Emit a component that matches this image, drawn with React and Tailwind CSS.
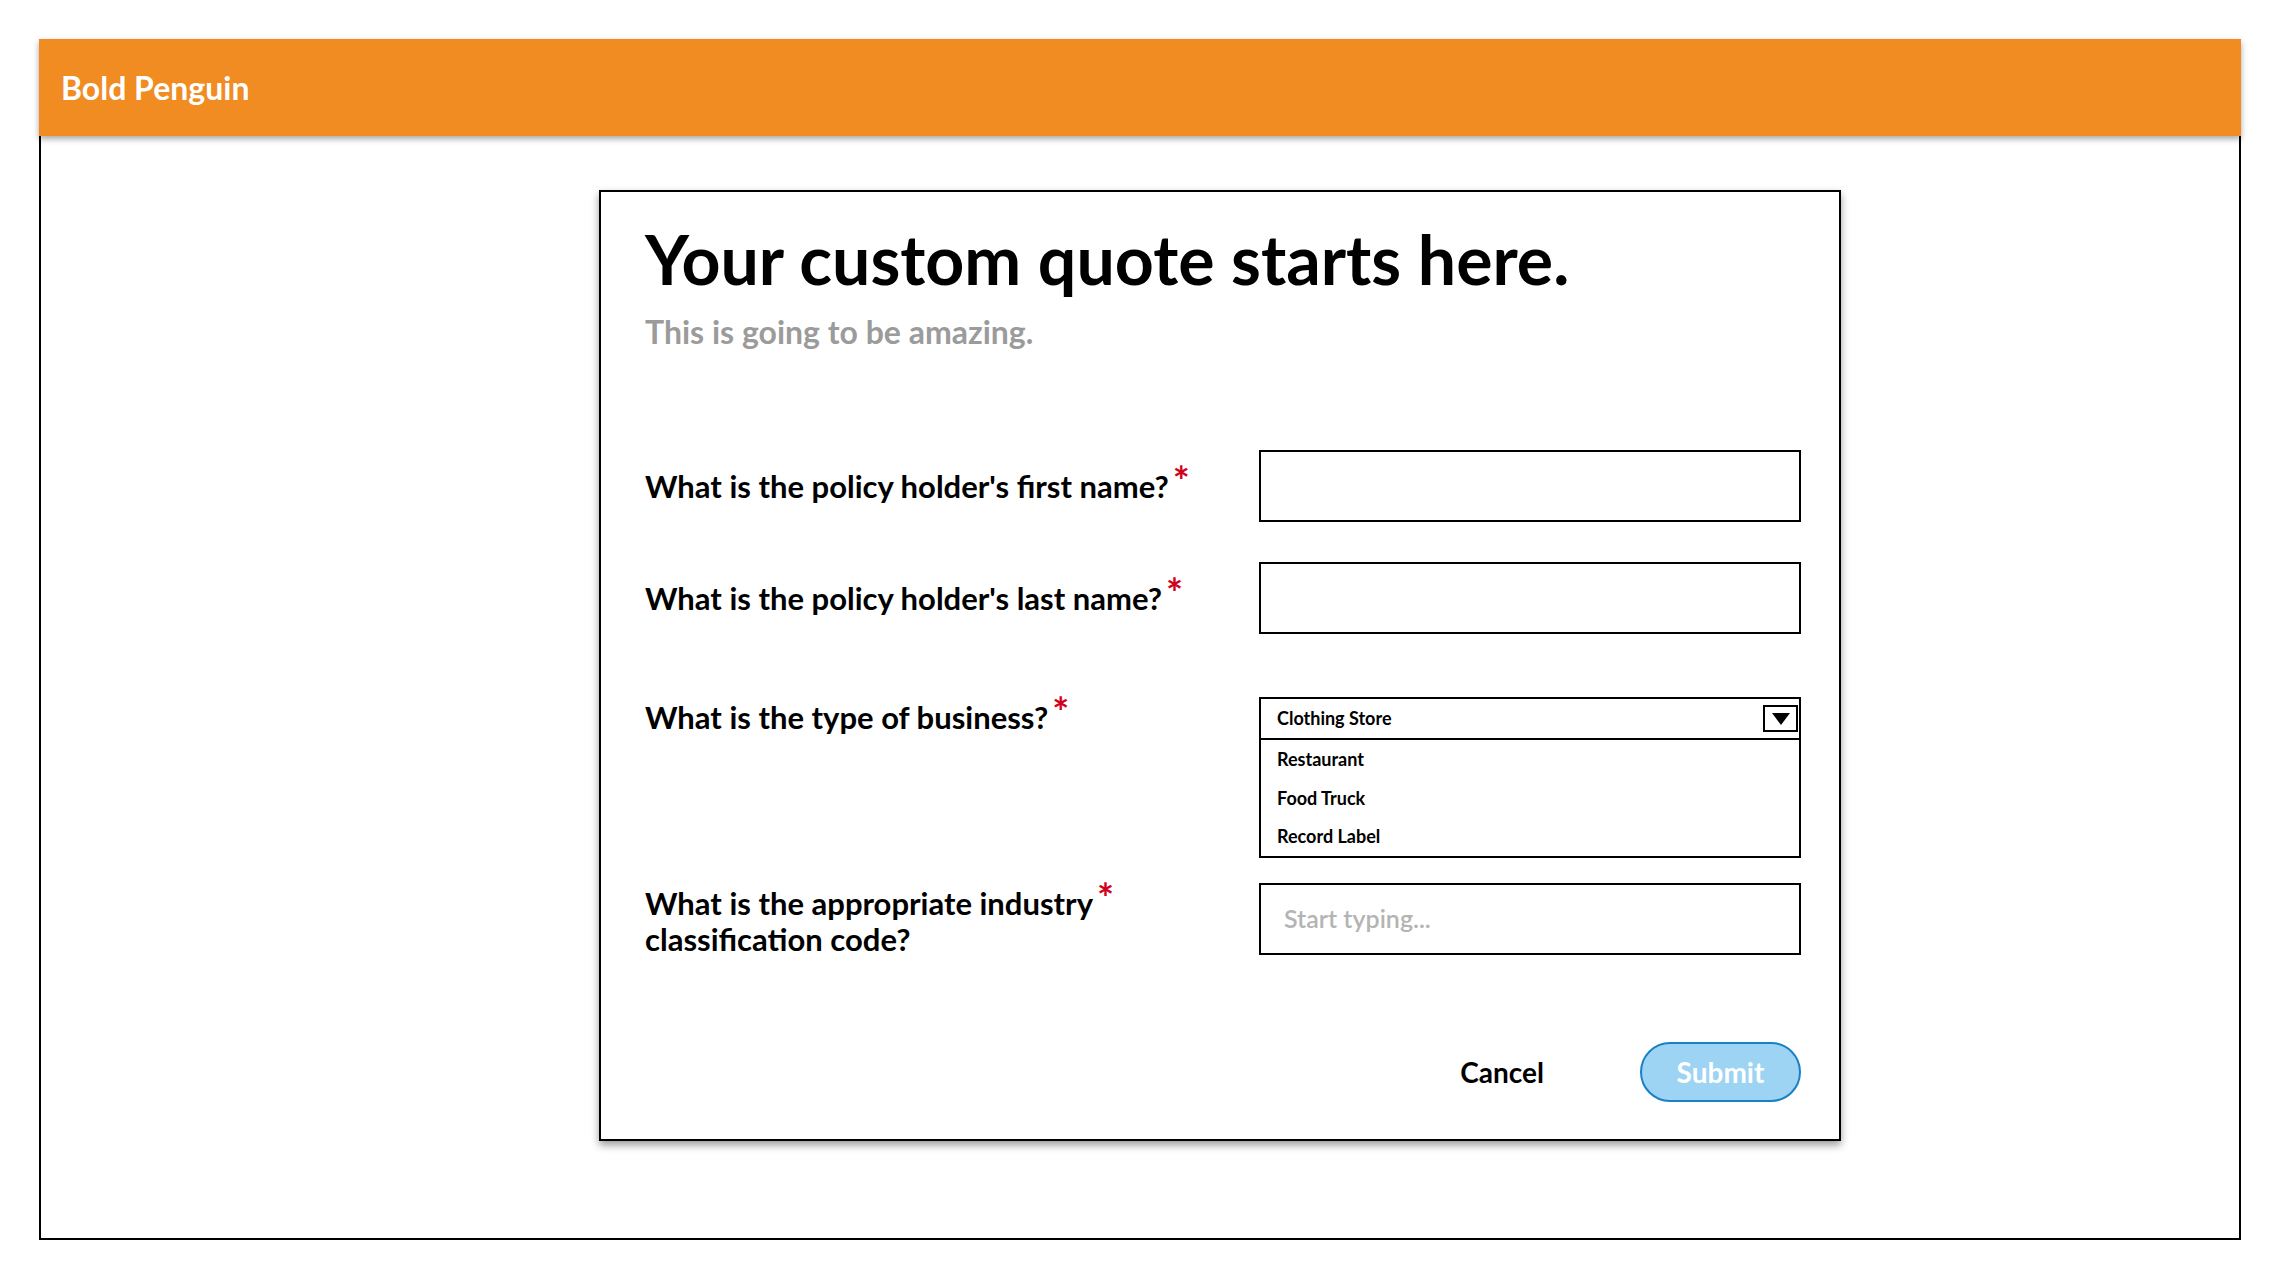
const font = { fontFamily: '"Lato", "Liberation Sans", sans-serif' };

function Req() {
  return <span className="relative -top-[2px] ml-[4px] text-[40px] leading-none text-[#d0021b]">*</span>;
}

function TextField({ placeholder }) {
  return (
    <div className="flex h-[72px] w-[542px] items-center border-2 border-black bg-white pl-[23px]">
      {placeholder && <span className="text-[25px] font-semibold text-[#b4b4b4]">{placeholder}</span>}
    </div>
  );
}

function BusinessSelect() {
  const options = ['Restaurant', 'Food Truck', 'Record Label'];
  return (
    <div className="w-[542px] border-2 border-black bg-white">
      <div className="flex h-[41px] items-center justify-between border-b-2 border-black pl-[16px] pr-[1px]">
        <span className="text-[18px] font-bold text-black">Clothing Store</span>
        <div className="flex h-[27px] w-[35px] items-center justify-center border-2 border-black">
          <svg width="20" height="14" viewBox="0 0 20 14">
            <path d="M1 1 H19 L10 13 Z" fill="#000" />
          </svg>
        </div>
      </div>
      <div className="flex h-[116px] flex-col">
        {options.map((o) => (
          <div key={o} className="flex h-[39px] items-center pl-[16px] text-[18px] font-bold text-black">
            {o}
          </div>
        ))}
      </div>
    </div>
  );
}

export default function App() {
  return (
    <div className="min-h-screen bg-white px-[39px] pt-[39px]" style={font}>
      <div className="relative z-10 flex h-[97px] items-center bg-[#f08c22] pl-[22px] shadow-[0_3px_6px_rgba(0,0,0,0.35)]">
        <span className="text-[32px] font-bold text-white">Bold Penguin</span>
      </div>
      <div className="h-[1104px] border-x-2 border-b-2 border-black pl-[558px] pt-[54px]">
        <div className="h-[951px] w-[1242px] border-2 border-black bg-white pl-[44px] pr-[38px] pt-[33px] shadow-[0_4px_8px_rgba(0,0,0,0.4)]">
          <h1 className="text-[68px] font-bold leading-none text-black">Your custom quote starts here.</h1>
          <p className="mt-[23px] text-[32px] font-bold leading-none text-[#9b9b9b]">This is going to be amazing.</p>

          <div className="mt-[102px] flex items-center">
            <label className="w-[614px] text-[31px] font-bold text-black">
              What is the policy holder's first name?<Req />
            </label>
            <TextField />
          </div>

          <div className="mt-[40px] flex items-center">
            <label className="w-[614px] text-[31px] font-bold text-black">
              What is the policy holder's last name?<Req />
            </label>
            <TextField />
          </div>

          <div className="mt-[63px] flex items-start">
            <label className="flex h-[41px] w-[614px] items-center text-[31px] font-bold text-black">
              <span>
                What is the type of business?<Req />
              </span>
            </label>
            <BusinessSelect />
          </div>

          <div className="mt-[22px] flex items-center">
            <label className="w-[614px] text-[31px] font-bold leading-[36px] text-black">
              What is the appropriate industry<Req />
              <br />
              classification code?
            </label>
            <TextField placeholder="Start typing..." />
          </div>

          <div className="mt-[85px] flex items-center justify-end">
            <button className="mr-[96px] text-[28px] font-bold text-black">Cancel</button>
            <button className="h-[60px] w-[161px] rounded-full border-2 border-[#1a80c4] bg-[#9dd3f3] text-[28px] font-bold text-white">
              Submit
            </button>
          </div>
        </div>
      </div>
    </div>
  );
}
